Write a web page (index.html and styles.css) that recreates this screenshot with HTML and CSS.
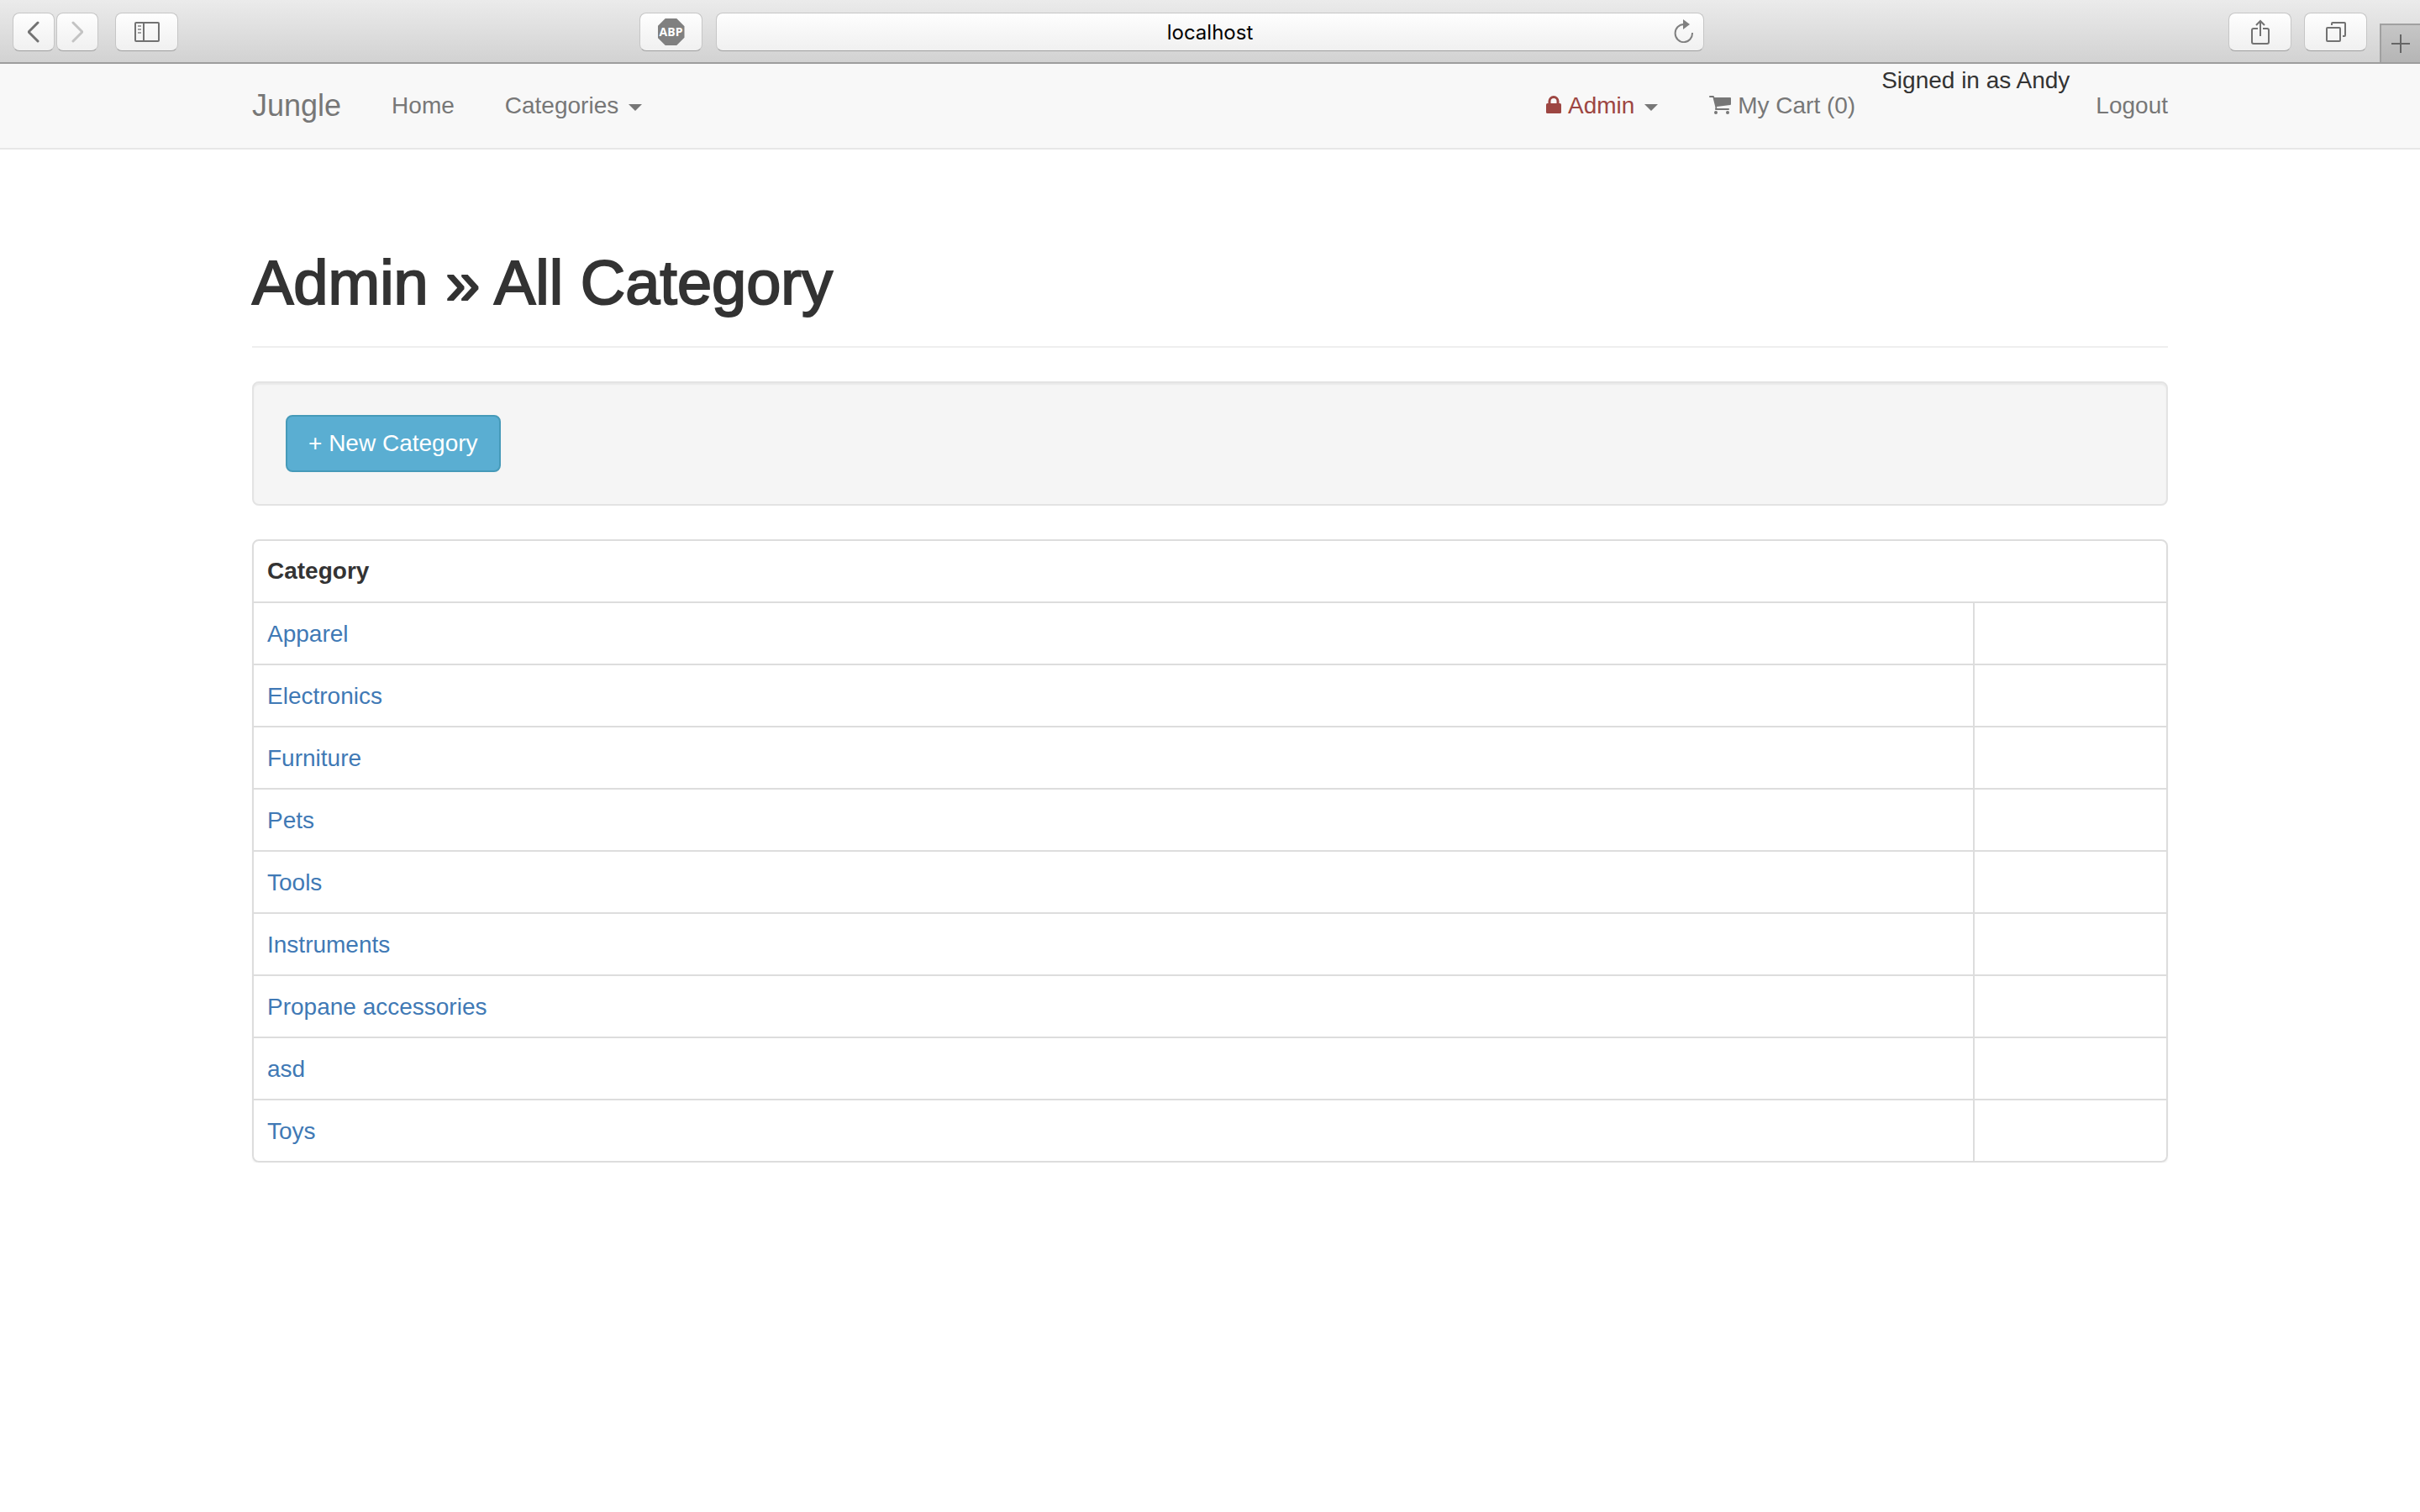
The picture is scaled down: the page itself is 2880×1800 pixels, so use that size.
FILE: index.html
```html
<!DOCTYPE html>
<html lang="en">
<head>
<meta charset="utf-8">
<title>Jungle</title>
<link rel="stylesheet" href="styles.css">
</head>
<body>
<div class="toolbar">
  <div class="toolbar-side">
    <div class="history">
      <button class="tool tool-nav" type="button" aria-label="Back">
        <svg width="14" height="26" viewBox="0 0 14 26"><path d="M12 2 1 13l11 11" fill="none" stroke="#727272" stroke-width="3" stroke-linecap="round" stroke-linejoin="round"/></svg>
      </button>
      <button class="tool tool-nav" type="button" aria-label="Forward">
        <svg width="14" height="26" viewBox="0 0 14 26"><path d="m2 2 11 11L2 24" fill="none" stroke="#c3c3c3" stroke-width="3" stroke-linecap="round" stroke-linejoin="round"/></svg>
      </button>
    </div>
    <button class="tool" type="button" aria-label="Show sidebar">
      <svg width="30" height="24" viewBox="0 0 30 24"><rect x="1" y="1" width="28" height="22" rx="1" fill="none" stroke="#727272" stroke-width="2"/><path d="M11 1v22" stroke="#727272" stroke-width="2"/><path d="M4 5h4M4 9h4M4 13h4" stroke="#a0a0a0" stroke-width="2"/></svg>
    </button>
    <button class="tool tool-abp" type="button"><span class="octagon">ABP</span></button>
  </div>
  <div class="address">
    <input class="address-input" type="text" value="localhost" aria-label="Address">
    <button class="reload" type="button" aria-label="Reload">
      <svg width="24" height="28" viewBox="0 0 24 28"><path d="M22 16A10.200 10.600 0 1 1 12 6" fill="none" stroke="#808080" stroke-width="2"/><path d="M11 0v12l8-6z" fill="#808080"/></svg>
    </button>
  </div>
  <div class="toolbar-side toolbar-right">
    <button class="tool" type="button" aria-label="Share">
      <svg width="24" height="32" viewBox="0 0 24 32"><path d="M9 12H4q-2 0-2 2v14q0 2 2 2h16q2 0 2-2V14q0-2-2-2h-5M12 21V3M7 8l5-5 5 5" fill="none" stroke="#727272" stroke-width="2"/></svg>
    </button>
    <button class="tool" type="button" aria-label="Show all tabs">
      <svg width="24" height="24" viewBox="0 0 24 24"><rect x="1" y="7" width="16" height="16" rx="1" fill="none" stroke="#727272" stroke-width="2"/><path d="M7 4V2q0-1 1-1h14q1 0 1 1v14q0 1-1 1h-2" fill="none" stroke="#727272" stroke-width="2"/></svg>
    </button>
    <button class="new-tab" type="button" aria-label="New tab">
      <svg width="22" height="22" viewBox="0 0 22 22"><path d="M11 0v22M0 11h22" stroke="#666" stroke-width="2"/></svg>
    </button>
  </div>
</div>

<header class="navbar">
  <nav class="container navbar-row">
    <a class="brand" href="#">Jungle</a>
    <a class="nav-link" href="#">Home</a>
    <a class="nav-link" href="#">Categories <span class="caret"></span></a>
    <div class="navbar-right">
      <a class="nav-link" href="#"><span class="admin"><svg class="icon" width="18" height="24" viewBox="0 0 18 24"><path d="M4 11V7.500a5 5 0 0 1 10 0V11" fill="none" stroke="currentColor" stroke-width="3"/><rect y="10" width="18" height="12" rx="1.500" fill="currentColor"/></svg>Admin</span> <span class="caret"></span></a>
      <a class="nav-link" href="#"><svg class="icon" width="26" height="24" viewBox="0 0 26 24"><path d="M0 2q0-1 1-1h4q1 0 1.300 2H25q1 0 1 1v7q0 1-1 1L9 14l.400 2H23q1 0 1 1t-1 1H8q-1 0-1-1l.500-2L4.500 3H1Q0 3 0 2z" fill="currentColor"/><circle cx="8" cy="21" r="2" fill="currentColor"/><circle cx="22" cy="21" r="2" fill="currentColor"/></svg>My Cart (0)</a>
      <span>Signed in as Andy</span>
      <a class="nav-link" href="#">Logout</a>
    </div>
  </nav>
</header>

<main class="container">
  <h1 class="page-title">Admin » All Category</h1>
  <div class="well"><button class="btn-info" type="button">+ New Category</button></div>
  <div class="panel">
    <table class="table">
      <thead><tr><th colspan="2" scope="col">Category</th></tr></thead>
      <tbody>
        <tr><td><a href="#">Apparel</a></td><td class="actions"></td></tr>
        <tr><td><a href="#">Electronics</a></td><td class="actions"></td></tr>
        <tr><td><a href="#">Furniture</a></td><td class="actions"></td></tr>
        <tr><td><a href="#">Pets</a></td><td class="actions"></td></tr>
        <tr><td><a href="#">Tools</a></td><td class="actions"></td></tr>
        <tr><td><a href="#">Instruments</a></td><td class="actions"></td></tr>
        <tr><td><a href="#">Propane accessories</a></td><td class="actions"></td></tr>
        <tr><td><a href="#">asd</a></td><td class="actions"></td></tr>
        <tr><td><a href="#">Toys</a></td><td class="actions"></td></tr>
      </tbody>
    </table>
  </div>
</main>
</body>
</html>
```
FILE: styles.css
```css
* { box-sizing: border-box; }

body {
  margin: 0;
  background: #fff;
  color: #333;
  font: 28px/40px "Helvetica Neue", "Liberation Sans", Arial, sans-serif;
}

a { color: #4079b5; text-decoration: none; }
button, input { font: inherit; }
button { padding: 0; }
svg { display: block; }

/* Browser toolbar */
.toolbar {
  display: grid;
  grid-template-columns: 1fr minmax(0, 1176px) 1fr;
  height: 76px;
  background: linear-gradient(#ebebeb, #d2d2d2);
  border-bottom: 2px solid #9d9d9d;
}

.toolbar-side {
  display: flex;
  align-items: flex-start;
  gap: 20px;
  padding: 15px 16px 0 15px;
}

.history { display: flex; gap: 2px; }

.tool, .address-input {
  height: 46px;
  border: 1px solid #c6c6c6;
  border-bottom-color: #a0a0a0;
  border-radius: 8px;
  background: linear-gradient(#fefefe, #f0f0f0);
}

.tool {
  display: flex;
  align-items: center;
  justify-content: center;
  width: 75px;
}

.tool-nav { width: 50px; }
.tool-abp { margin-left: auto; }

.octagon {
  width: 32px;
  background: #808080;
  color: #fff;
  font: bold 14px/32px "Open Sans", sans-serif;
  clip-path: polygon(29% 0, 71% 0, 100% 29%, 100% 71%, 71% 100%, 29% 100%, 0 71%, 0 29%);
}

.address { position: relative; padding-top: 15px; }

.address-input {
  display: block;
  width: 100%;
  padding: 0 48px;
  color: #000;
  font: 24px "Inter", sans-serif;
  text-align: center;
}

.reload {
  position: absolute;
  top: 23px;
  right: 12px;
  border: 0;
  background: none;
}

.toolbar-right {
  gap: 15px;
  justify-content: flex-end;
  padding-right: 0;
}

.new-tab {
  display: flex;
  align-items: center;
  justify-content: flex-end;
  align-self: flex-end;
  width: 48px;
  height: 46px;
  padding-right: 12px;
  border: solid #a0a0a0;
  border-width: 2px 0 0 2px;
  background: linear-gradient(#c6c6c6, #b5b5b5);
}

/* Site navigation */
.container {
  width: calc(100% - 60px);
  max-width: 2280px;
  margin: 0 auto;
}

.navbar { background: #f8f8f8; border-bottom: 2px solid #e7e7e7; }
.navbar-row { display: flex; }

.brand {
  padding: 30px 30px 30px 0;
  color: #777;
  font-size: 36px;
}

.nav-link { padding: 30px; color: #777; }

.navbar-right {
  display: flex;
  gap: 1px;
  margin-left: auto;
  margin-right: -30px;
}

.caret {
  display: inline-block;
  margin-left: 4px;
  border: 8px solid transparent;
  border-top-color: #777;
  border-bottom: 0;
  vertical-align: middle;
}

.admin { color: #9d4642; }
.icon { display: inline-block; margin-right: 8px; vertical-align: -2px; }

/* Page content */
.page-title {
  margin: 119px 0 40px;
  padding-bottom: 35px;
  border-bottom: 2px solid #eee;
  font-size: 74px;
  font-weight: 400;
  line-height: 80px;
  -webkit-text-stroke: 2px #333;
}

.well {
  display: flex;
  margin-bottom: 40px;
  padding: 38px;
  border: 2px solid #e3e3e3;
  border-radius: 8px;
  background: #f5f5f5;
  box-shadow: inset 0 2px 2px rgba(0, 0, 0, .05);
}

.btn-info {
  padding: 12px 25px;
  border: 2px solid #469ab9;
  border-radius: 8px;
  background: #5aaed2;
  color: #fff;
}

.panel {
  overflow: hidden;
  border: 2px solid #ddd;
  border-radius: 8px;
  box-shadow: 0 2px 2px rgba(0, 0, 0, .05);
}

.table { width: 100%; border-spacing: 0; }
.table th, .table td { padding: 16px; text-align: left; }
.table td { padding: 17px 16px 15px; border-top: 2px solid #ddd; }
.table .actions { width: 230px; border-left: 2px solid #ddd; }
```
